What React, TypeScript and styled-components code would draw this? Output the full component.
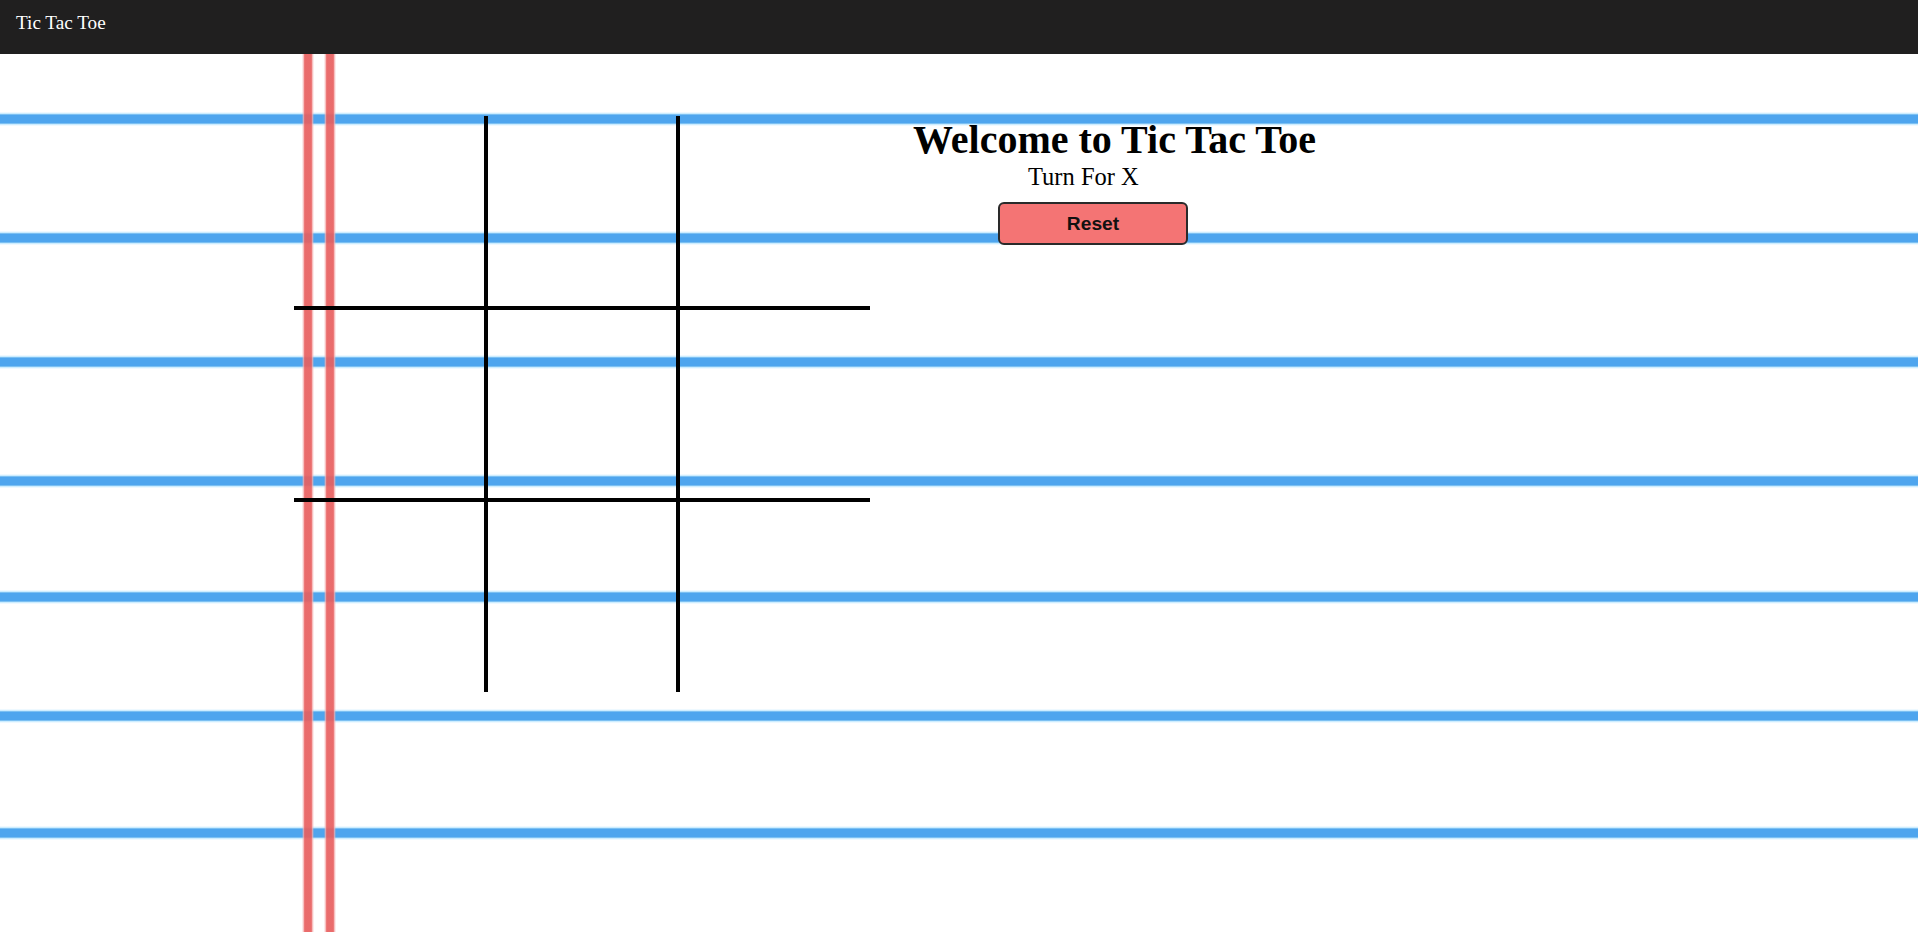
import React, { useState } from "react";
import styled, { createGlobalStyle } from "styled-components";

const GlobalStyle = createGlobalStyle`
  html, body {
    margin: 0;
    padding: 0;
    background: #ffffff;
  }
  body {
    font-family: "Liberation Serif", "Times New Roman", serif;
  }
  * { box-sizing: border-box; }
`;

const HEADER_H = 54;
const BLUE_CENTERS = [119, 238, 362, 481, 597, 716, 833].map((y) => y - HEADER_H);
const RED_CENTERS = [308, 329.5];

const blueLine =
  "linear-gradient(to bottom, rgba(220,245,255,0) 0px, rgba(200,235,255,0.9) 1.5px, #7cc0f2 2.5px, #4ea5ee 3.5px, #4ea5ee 10.5px, #7cc0f2 11.5px, rgba(200,235,255,0.9) 12.5px, rgba(220,245,255,0) 14px)";
const redLine =
  "linear-gradient(to right, rgba(255,220,220,0) 0px, rgba(244,170,170,0.75) 1.5px, rgba(234,106,106,0.9) 2.5px, rgba(232,95,95,0.92) 3px, rgba(232,95,95,0.92) 9px, rgba(234,106,106,0.9) 9.5px, rgba(244,170,170,0.75) 10.5px, rgba(255,220,220,0) 12px)";

const paperImages = [
  ...RED_CENTERS.map(() => redLine),
  ...BLUE_CENTERS.map(() => blueLine),
].join(", ");
const paperPositions = [
  ...RED_CENTERS.map((x) => `${x - 6}px 0`),
  ...BLUE_CENTERS.map((y) => `0 ${y - 7}px`),
].join(", ");
const paperSizes = [
  ...RED_CENTERS.map(() => "12px 100%"),
  ...BLUE_CENTERS.map(() => "100% 14px"),
].join(", ");

const Page = styled.div`
  min-height: 100vh;
  display: flex;
  flex-direction: column;
`;

const TopBar = styled.header`
  height: ${HEADER_H}px;
  flex: 0 0 ${HEADER_H}px;
  background: #201f1f;
  color: #ffffff;
  display: flex;
  align-items: flex-start;
  padding: 12px 0 0 16px;
  font-family: "Liberation Serif", "Times New Roman", serif;
  font-size: 19.2px;
  line-height: 21px;
`;

const Paper = styled.main`
  flex: 1;
  min-height: ${932 - HEADER_H}px;
  background-color: #ffffff;
  background-image: ${paperImages};
  background-position: ${paperPositions};
  background-size: ${paperSizes};
  background-repeat: no-repeat;
  display: flex;
  align-items: flex-start;
  padding: ${116 - HEADER_H}px 0 0 294px;
`;

const Board = styled.div`
  display: grid;
  grid-template-columns: repeat(3, 192px);
  grid-template-rows: repeat(3, 192px);
  flex: 0 0 576px;
`;

const Cell = styled.button<{ $row: number; $col: number }>`
  appearance: none;
  background: transparent;
  margin: 0;
  padding: 0;
  cursor: pointer;
  border: 0 solid #000000;
  border-left-width: ${(p) => (p.$col > 0 ? "2px" : "0")};
  border-right-width: ${(p) => (p.$col < 2 ? "2px" : "0")};
  border-top-width: ${(p) => (p.$row > 0 ? "2px" : "0")};
  border-bottom-width: ${(p) => (p.$row < 2 ? "2px" : "0")};
  font-family: "Liberation Sans", Arial, sans-serif;
  font-size: 120px;
  font-weight: 700;
  color: #111111;
  display: flex;
  align-items: center;
  justify-content: center;
`;

const Panel = styled.section`
  display: flex;
  flex-direction: column;
  align-items: flex-start;
  margin: 2px 0 0 43px;
`;

const Title = styled.h1`
  margin: 0;
  font-family: "Liberation Serif", "Times New Roman", serif;
  font-size: 40px;
  font-weight: 700;
  line-height: 44px;
  color: #000000;
`;

const Turn = styled.div<{ $indent: number }>`
  margin: 1px 0 0 ${(p) => p.$indent}px;
  font-family: "Liberation Serif", "Times New Roman", serif;
  font-size: 24.5px;
  line-height: 27px;
  color: #000000;
`;

const ResetButton = styled.button<{ $indent: number }>`
  margin: 12px 0 0 ${(p) => p.$indent}px;
  width: 190px;
  height: 43px;
  background: #f47474;
  border: 2px solid #2a2a2a;
  border-radius: 6px;
  font-family: "Liberation Sans", Arial, sans-serif;
  font-size: 19.2px;
  font-weight: 700;
  color: #111111;
  cursor: pointer;
  padding: 0;
`;

type Mark = "X" | "O" | null;

export default function App() {
  const [cells, setCells] = useState<Mark[]>(Array(9).fill(null));
  const [turn, setTurn] = useState<"X" | "O">("X");

  const play = (i: number) => {
    if (cells[i]) return;
    const next = cells.slice();
    next[i] = turn;
    setCells(next);
    setTurn(turn === "X" ? "O" : "X");
  };

  const reset = () => {
    setCells(Array(9).fill(null));
    setTurn("X");
  };

  return (
    <Page>
      <GlobalStyle />
      <TopBar>Tic Tac Toe</TopBar>
      <Paper>
        <Board>
          {cells.map((c, i) => (
            <Cell
              key={i}
              $row={Math.floor(i / 3)}
              $col={i % 3}
              onClick={() => play(i)}
              aria-label={`cell ${i + 1}`}
            >
              {c}
            </Cell>
          ))}
        </Board>
        <Panel>
          <Title>Welcome to Tic Tac Toe</Title>
          <Turn $indent={115}>Turn For {turn}</Turn>
          <ResetButton $indent={85} onClick={reset}>
            Reset
          </ResetButton>
        </Panel>
      </Paper>
    </Page>
  );
}
